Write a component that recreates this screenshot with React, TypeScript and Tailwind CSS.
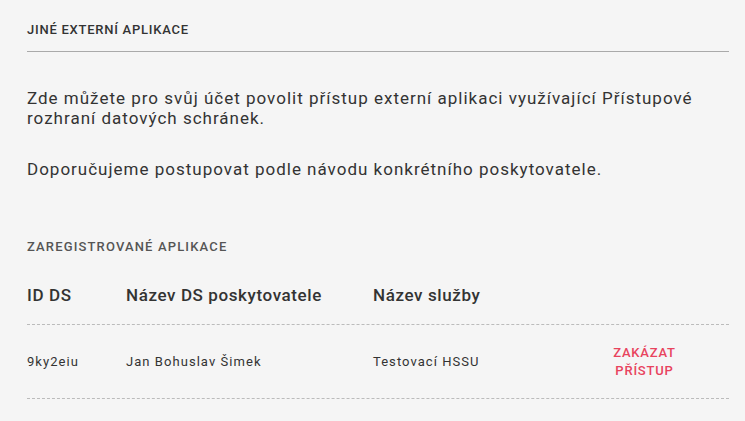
import React from "react";

export default function App() {
  const font = { fontFamily: "Roboto, 'Noto Sans', sans-serif" };
  return (
    <div className="min-h-[421px] w-full bg-[#f5f5f5] text-[#333]" style={font}>
      <div className="pl-[27px] pr-[16px] pt-[22px]">
        <h2 className="text-[13px] font-medium leading-[16px] tracking-[0.75px] text-[#333] pb-[13px] border-b border-[#aaa]">
          JINÉ EXTERNÍ APLIKACE
        </h2>
        <p className="mt-[36px] text-[17px] leading-[20px] tracking-[1px] text-[#333]">
          Zde můžete pro svůj účet povolit přístup externí aplikaci využívající Přístupové rozhraní datových schránek.
        </p>
        <p className="mt-[31px] text-[17px] leading-[20px] tracking-[1px] text-[#333]">
          Doporučujeme postupovat podle návodu konkrétního poskytovatele.
        </p>
        <h3 className="mt-[60px] text-[13px] font-medium leading-[16px] tracking-[1.15px] text-[#555]">
          ZAREGISTROVANÉ APLIKACE
        </h3>
        <div className="mt-[30px]">
          <div className="grid grid-cols-[99px_247px_184px_1fr] items-center border-b border-dashed border-[#bbb] pb-[19px] text-[17px] font-medium leading-[20px] tracking-[0.6px] text-[#333]">
            <div>ID DS</div>
            <div>Název DS poskytovatele</div>
            <div>Název služby</div>
            <div></div>
          </div>
          <div className="grid grid-cols-[99px_247px_184px_1fr] items-center border-b border-dashed border-[#bbb] h-[74px] text-[13px] leading-[18px] tracking-[1.05px] text-[#333]">
            <div>9ky2eiu</div>
            <div>Jan Bohuslav Šimek</div>
            <div>Testovací HSSU</div>
            <div className="flex justify-center">
              <button className="pl-[3px] text-center text-[13px] font-medium leading-[18px] tracking-[0.8px] text-[#e8435d]">
                ZAKÁZAT
                <br />
                PŘÍSTUP
              </button>
            </div>
          </div>
        </div>
      </div>
    </div>
  );
}
